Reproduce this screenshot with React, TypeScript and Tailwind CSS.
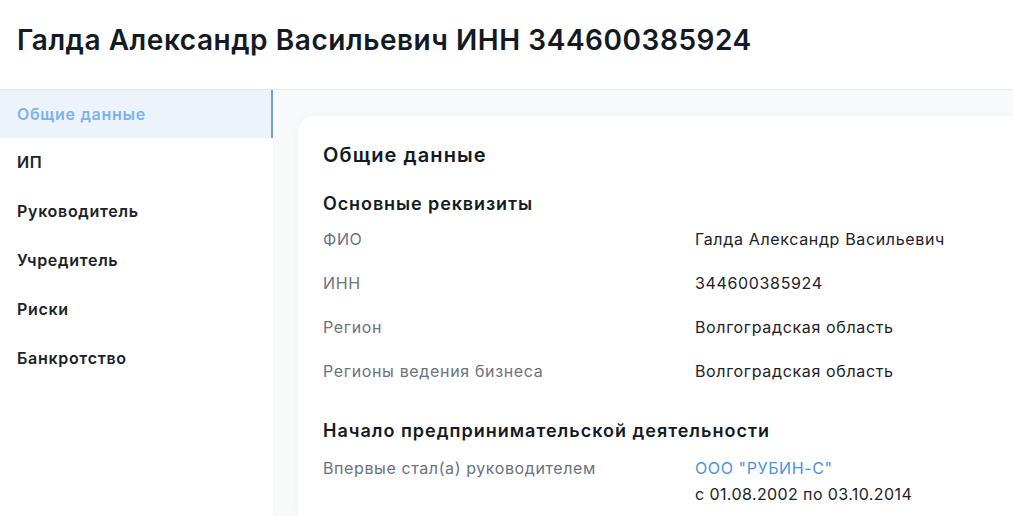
import React from 'react';

const NAV = ['Общие данные', 'ИП', 'Руководитель', 'Учредитель', 'Риски', 'Банкротство'];

const REQUISITES = [
  { label: 'ФИО', value: 'Галда Александр Васильевич' },
  { label: 'ИНН', value: '344600385924' },
  { label: 'Регион', value: 'Волгоградская область' },
  { label: 'Регионы ведения бизнеса', value: 'Волгоградская область' },
];

export default function App() {
  return (
    <div className="h-[516px] overflow-hidden bg-white text-[#1a202c] font-['Inter',sans-serif]">
      <header className="h-[90px] border-b border-[#e5e7eb] px-[17px] flex items-center">
        <h1 className="text-[28px] font-semibold tracking-[0.55px] text-[#141a23] pb-[9px]">
          Галда Александр Васильевич ИНН 344600385924
        </h1>
      </header>

      <div className="flex">
        {/* меню */}
        <nav className="w-[273px] shrink-0 flex flex-col">
          {NAV.map((item, i) => (
            <div
              key={item}
              className={`flex items-center px-[17px] text-[16px] font-semibold tracking-[0.7px] ${
                i === 0
                  ? 'h-[48px] bg-[#edf3fb] text-[#7cb1ee] border-r-2 border-[#6e9fd8] pb-[1px]'
                  : 'h-[49px] text-[#1c222b] pb-[2px]'
              }`}
            >
              {item}
            </div>
          ))}
        </nav>

        <main className="flex-1 bg-[#f8f9fa] pl-[25px] pt-[26px] h-[426px]">
          <section className="bg-white rounded-tl-[16px] shadow-[0_0_8px_rgba(0,0,0,0.03)] h-full px-[25px] pt-[25px]">
            <h2 className="text-[20px] font-semibold tracking-[1.1px] text-[#141a23] leading-[28px]">Общие данные</h2>

            <h3 className="mt-[22px] text-[18px] font-semibold tracking-[0.9px] text-[#141a23] leading-[26px]">
              Основные реквизиты
            </h3>
            <div className="tracking-[0.65px]">
              {REQUISITES.map((r) => (
                <div key={r.label} className="flex h-[44px] items-center text-[16px]">
                  <div className="w-[372px] shrink-0 text-[#6b7280]">{r.label}</div>
                  <div className="text-[#1c222b]">{r.value}</div>
                </div>
              ))}
            </div>

            <h3 className="mt-[25px] text-[18px] font-semibold tracking-[1px] text-[#141a23] leading-[26px]">
              Начало предпринимательской деятельности
            </h3>
            <div className="flex text-[16px] mt-[11px] leading-[26px] tracking-[0.6px]">
              <div className="w-[372px] shrink-0 text-[#6b7280]">Впервые стал(а) руководителем</div>
              <div>
                <div className="text-[#4a94e6]">ООО "РУБИН-С"</div>
                <div className="text-[#1c222b] tracking-[0.4px]">с 01.08.2002 по 03.10.2014</div>
              </div>
            </div>
          </section>
        </main>
      </div>
    </div>
  );
}
